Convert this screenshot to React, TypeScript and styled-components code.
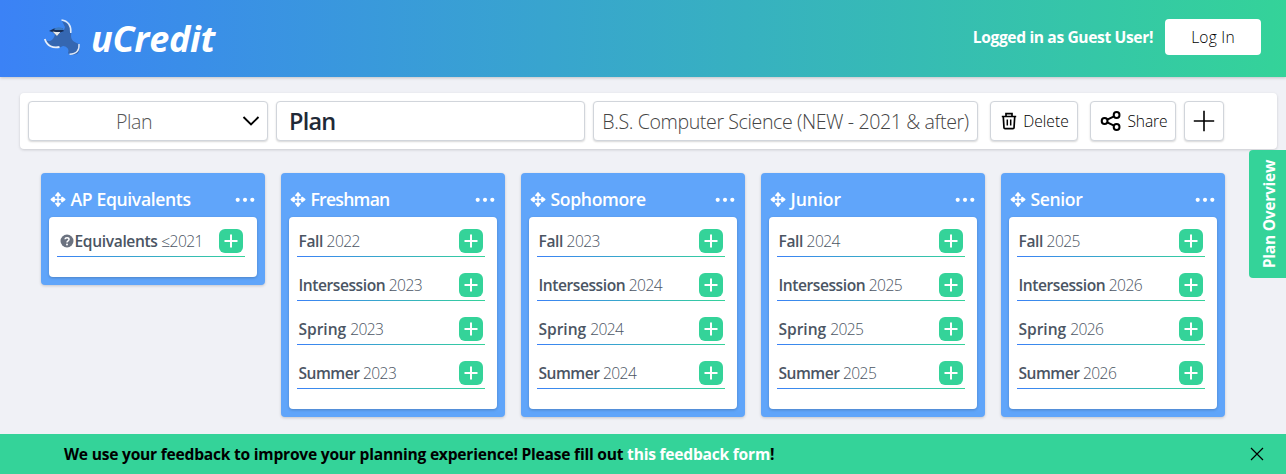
import React from "react";
import styled, { createGlobalStyle } from "styled-components";

const GlobalStyle = createGlobalStyle`
  *, *::before, *::after { box-sizing: border-box; }
  body {
    margin: 0;
    background: #f0f1f6;
    color: #000;
    font-family: "Segoe UI", "Open Sans", "Noto Sans", sans-serif;
    font-size: 15.6px;
    overflow: hidden;
  }
  button, input { font: inherit; color: inherit; }
`;

const Page = styled.div`
  position: relative;
  display: flex;
  flex-direction: column;
  height: 474px;
`;

const Text = styled.span<{ $size?: number; $weight?: number; $track?: number; $color?: string; $stretch?: number }>`
  font-size: ${(p) => p.$size ?? 15.6}px;
  font-weight: ${(p) => p.$weight ?? 400};
  font-stretch: ${(p) => p.$stretch ?? 100}%;
  letter-spacing: ${(p) => p.$track ?? 0}px;
  color: ${(p) => p.$color ?? "inherit"};
  white-space: pre;
`;

const Header = styled.header`
  display: flex;
  align-items: center;
  flex: none;
  height: 77px;
  padding: 0 25px 3px 43px;
  background: linear-gradient(to right, #3b82f6, #34d399);
  box-shadow: 0 1px 3px rgba(0, 0, 0, 0.2);
`;

const Brand = styled.div`
  display: flex;
  align-items: center;
  gap: 10px;
  padding-top: 2px;
  margin-right: auto;
  color: #fff;
  font-style: italic;
`;

const LoginButton = styled.button`
  width: 96px;
  height: 36px;
  margin-left: 12px;
  padding: 0 0 1px;
  border: 0;
  border-radius: 4px;
  background: #fff;
`;

const Toolbar = styled.section`
  display: flex;
  flex: none;
  width: 1257px;
  height: 56px;
  margin: 16px 0 0 20px;
  padding: 8px;
  border-radius: 4px;
  background: #fff;
  box-shadow: 0 1px 3px rgba(0, 0, 0, 0.16);
`;

const Field = styled.div<{ $width: number; $gap?: number }>`
  display: flex;
  align-items: center;
  justify-content: center;
  flex: none;
  width: ${(p) => p.$width}px;
  height: 40px;
  margin-left: ${(p) => p.$gap ?? 8}px;
  border: 1px solid #d1d5db;
  border-radius: 4px;
  background: #fff;
  box-shadow: 0 1px 2px rgba(0, 0, 0, 0.16);
`;

const SelectField = styled(Field)`
  justify-content: space-between;
  padding: 0 7px 0 87px;
`;

const NameField = styled(Field)`
  justify-content: flex-start;
  padding-left: 12px;
`;

const ActionField = styled(Field)`
  gap: 6px;
  padding-left: 2px;
`;

const Board = styled.main`
  display: flex;
  align-items: flex-start;
  gap: 16px;
  padding: 24px 0 0 41px;
`;

const YearCard = styled.article`
  display: flex;
  flex-direction: column;
  width: 224px;
  padding: 8px;
  border-radius: 4px;
  background: #60a5fa;
  box-shadow: 0 1px 3px rgba(0, 0, 0, 0.18);
`;

const YearHeader = styled.div`
  display: flex;
  align-items: center;
  gap: 5px;
  height: 36px;
  padding: 0 2.5px 0 0.5px;
  color: #fff;

  & > :last-child { margin-left: auto; }
`;

const Semesters = styled.div`
  display: flex;
  flex-direction: column;
  gap: 16px;
  padding: 12px 12px 20px 8px;
  border-radius: 4px;
  background: #fff;
  box-shadow: 0 1px 3px rgba(0, 0, 0, 0.2);
`;

const SemesterRow = styled.div`
  display: flex;
  align-items: flex-start;
  height: 28px;
  padding: 0 2px 0 1.5px;
  background: linear-gradient(to right, #3b82f6, #34d399) bottom / 100% 1px no-repeat;
`;

const SemesterName = styled.div`
  display: flex;
  align-items: center;
  flex: 1;
  height: 24px;
  color: #4b5563;

  & > svg { margin: 0 0.5px 0 1.5px; }
`;

const AddButton = styled.button`
  display: flex;
  align-items: center;
  justify-content: center;
  width: 24px;
  height: 24px;
  padding: 0;
  border: 0;
  border-radius: 6px;
  background: #34d399;
`;

const OverviewTab = styled.aside`
  position: absolute;
  top: 150px;
  right: 0;
  display: flex;
  align-items: center;
  justify-content: center;
  width: 37px;
  height: 128px;
  padding-left: 3px;
  border-radius: 4px 0 0 4px;
  background: #34d399;
  color: #fff;
  writing-mode: vertical-rl;

  & > span { transform: rotate(180deg); }
`;

const FeedbackBar = styled.footer`
  display: flex;
  align-items: center;
  justify-content: space-between;
  flex: none;
  height: 40px;
  margin-top: auto;
  padding: 0 22px 0 64px;
  background: #34d399;
`;

const FeedbackLink = styled.a`
  color: #fff;
`;

const Logo = () => (
  <svg width="38" height="38" viewBox="0 0 38 38" fill="none">
    <path d="M19 2C26 4 29 10 28 17C28 22 33 24 36 25C37 30 36 34 34 35C29 36 26 36 25 34C27 30 23 27 20 27C14 31 6 29 2 21C8 24 11 20 12 15C17 16 21 13 22 8Z" fill="#3567b1" />
    <path d="M18.500 .9C25 1.500 28.500 7 27.800 14" stroke="#dfeaf9" strokeWidth="1.500" />
    <path d="M1.800 20C4 27 10 29.500 16.500 28" stroke="#e8f0fb" strokeWidth="1.800" />
    <path d="M36 25C36.500 31 34 35 26.500 35.300" stroke="#dfeaf9" strokeWidth="1.400" />
    <path d="M6 12L11 9.500L19 9L21 12L17 14L14 17L9.500 13Z" fill="#172f58" />
    <path d="M9.500 12.500L13 13L17.500 13L14 17Z" fill="#e4e9ed" />
    <path d="M11 10Q15 7 20 9.500L20 11L12 11Z" fill="#3c7bc4" />
  </svg>
);

const MoveIcon = () => (
  <svg width="16" height="16" viewBox="0 0 16 16" fill="#fff">
    <path d="M8 1.900L10 4.500H6ZM8 15.100L6 12.500H10ZM1.400 8.500L4 6.500V10.500ZM14.600 8.500L12 10.500V6.500Z" stroke="#fff" strokeWidth="1.700" strokeLinejoin="round" />
    <path d="M8 4V13M3.500 8.500H12.500" stroke="#fff" strokeWidth="1.400" />
  </svg>
);

const MoreIcon = () => (
  <svg width="20" height="16" viewBox="0 0 20 16" fill="#fff">
    <circle cx="2.700" cy="8.800" r="2.100" />
    <circle cx="10" cy="8.800" r="2.100" />
    <circle cx="17.300" cy="8.800" r="2.100" />
  </svg>
);

const PlusIcon = () => (
  <svg width="14" height="14" viewBox="0 0 14 14">
    <path d="M7 .5V13.500M.5 7H13.500" stroke="#fff" strokeWidth="2" />
  </svg>
);

const HelpIcon = () => (
  <svg width="14" height="14" viewBox="0 0 14 14" fill="none">
    <circle cx="7" cy="7" r="6.500" fill="#6b7280" />
    <path d="M5 5.300C5.200 3.200 9 3.200 9 5.400C9 6.900 7 6.800 7 8.500" stroke="#fff" strokeWidth="1.500" />
    <circle cx="7" cy="10.500" r="1" fill="#fff" />
  </svg>
);

const ChevronIcon = () => (
  <svg width="18" height="12" viewBox="0 0 18 12" fill="none">
    <path d="M1.500 2L9 9.500L16.500 2" stroke="#000" strokeWidth="1.900" />
  </svg>
);

const TrashIcon = () => (
  <svg width="16" height="18" viewBox="0 0 16 18" fill="none" stroke="#000" strokeWidth="1.700">
    <path d="M.8 4.500H15.200M5 4V1.600H11V4M2.300 5L3 16Q3.100 16.700 4 16.700H12Q12.900 16.700 13 16L13.700 5" />
    <path d="M6.300 7.500V13.500M9.700 7.500V13.500" strokeWidth="1.500" />
  </svg>
);

const ShareIcon = () => (
  <svg width="21" height="22" viewBox="0 0 21 22" fill="none" stroke="#000" strokeWidth="2">
    <circle cx="4.600" cy="11" r="2.900" />
    <circle cx="16.600" cy="5" r="2.900" />
    <circle cx="16.600" cy="17" r="2.900" />
    <path d="M7.300 9.700L14 6.300M7.300 12.300L14 15.700" />
  </svg>
);

const NewPlanIcon = () => (
  <svg width="22" height="22" viewBox="0 0 22 22">
    <path d="M11 .8V21.200M.8 11H21.200" stroke="#000" strokeWidth="1.600" />
  </svg>
);

const CloseIcon = () => (
  <svg width="14" height="14" viewBox="0 0 14 14">
    <path d="M1 1L13 13M13 1L1 13" stroke="#000" strokeWidth="1.200" />
  </svg>
);

type Semester = { name: string; track: number; year: string; help?: boolean };

const terms = (start: number): Semester[] => [
  { name: "Fall", track: -0.4, year: `${start}` },
  { name: "Intersession", track: -0.45, year: `${start + 1}` },
  { name: "Spring", track: -0.05, year: `${start + 1}` },
  { name: "Summer", track: -0.5, year: `${start + 1}` },
];

const years: { title: string; track: number; semesters: Semester[] }[] = [
  {
    title: "AP Equivalents",
    track: -0.36,
    semesters: [{ name: "Equivalents", track: -0.36, year: "≤2021", help: true }],
  },
  { title: "Freshman", track: -0.75, semesters: terms(2022) },
  { title: "Sophomore", track: -0.35, semesters: terms(2023) },
  { title: "Junior", track: -0.05, semesters: terms(2024) },
  { title: "Senior", track: -0.4, semesters: terms(2025) },
];

export default function App() {
  return (
    <Page>
      <GlobalStyle />
      <Header>
        <Brand>
          <Logo />
          <Text $size={36} $weight={750} $stretch={93} $track={-0.25}>uCredit</Text>
        </Brand>
        <Text $weight={700} $stretch={93} $track={-0.37} $color="#fff">Logged in as Guest User!</Text>
        <LoginButton><Text $weight={350} $track={0.2}>Log In</Text></LoginButton>
      </Header>

      <Toolbar>
        <SelectField $width={240} $gap={0}>
          <Text $size={19.600} $weight={300} $track={-0.4} $color="#555">Plan</Text>
          <ChevronIcon />
        </SelectField>
        <NameField $width={309}>
          <Text $size={23.500} $weight={600} $stretch={95} $track={-0.8} $color="#1f2937">Plan</Text>
        </NameField>
        <Field $width={385}>
          <Text $size={19.600} $weight={300} $track={-0.4} $color="#444">B.S. Computer Science (NEW - 2021 &amp; after)</Text>
        </Field>
        <ActionField $width={88} $gap={12}>
          <TrashIcon />
          <Text $weight={350}>Delete</Text>
        </ActionField>
        <ActionField $width={86} $gap={12}>
          <ShareIcon />
          <Text $weight={350} $track={-0.1}>Share</Text>
        </ActionField>
        <Field $width={40}><NewPlanIcon /></Field>
      </Toolbar>

      <Board>
        {years.map((y) => (
          <YearCard key={y.title}>
            <YearHeader>
              <MoveIcon />
              <Text $size={17.600} $weight={600} $stretch={95} $track={y.track}>{y.title}</Text>
              <MoreIcon />
            </YearHeader>
            <Semesters>
              {y.semesters.map((s) => (
                <SemesterRow key={s.name}>
                  <SemesterName>
                    {s.help && <HelpIcon />}
                    <Text $weight={600} $stretch={95} $track={s.track}>{s.name} </Text>
                    <Text $weight={300} $track={-0.6}>{s.year}</Text>
                  </SemesterName>
                  <AddButton aria-label={`Add to ${s.name}`}><PlusIcon /></AddButton>
                </SemesterRow>
              ))}
            </Semesters>
          </YearCard>
        ))}
      </Board>

      <OverviewTab><Text $weight={700} $stretch={93} $track={-0.3}>Plan Overview</Text></OverviewTab>

      <FeedbackBar>
        <Text $weight={700} $stretch={93} $track={-0.23}>
          We use your feedback to improve your planning experience! Please fill out <FeedbackLink>this feedback form</FeedbackLink>!
        </Text>
        <CloseIcon />
      </FeedbackBar>
    </Page>
  );
}
